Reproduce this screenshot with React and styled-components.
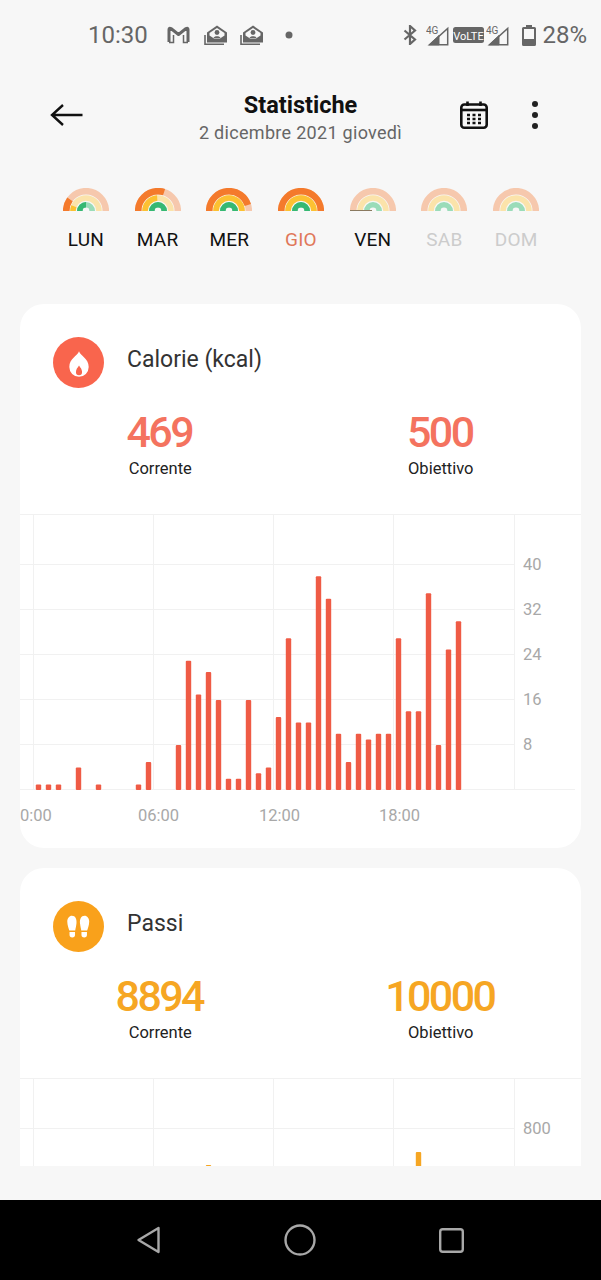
import React from "react";
import styled, { createGlobalStyle } from "styled-components";

const GlobalStyle = createGlobalStyle`
  * { box-sizing: border-box; }
  html, body { margin: 0; padding: 0; background: #f7f7f7; }
  body { font-family: Roboto, "Liberation Sans", sans-serif; }
`;

const Screen = styled.div`
  width: 601px;
  height: 1280px;
  display: flex;
  flex-direction: column;
  background: #f7f7f7;
  overflow: hidden;
`;

const Content = styled.div`
  height: 1166px;
  overflow: hidden;
  flex-shrink: 0;
`;

const StatusBar = styled.div`
  height: 70px;
  display: flex;
  align-items: center;
  justify-content: space-between;
  padding: 0 14px 0 88px;
  color: #666;
`;

const StatusGroup = styled.div`
  display: flex;
  align-items: center;
`;

const StatusText = styled.span`
  font-size: 24px;
  line-height: 28px;
  color: #666;
  margin-left: ${(p) => p.$ml || 0}px;
`;

const StatusIcon = styled.svg`
  display: block;
  flex-shrink: 0;
  margin-left: ${(p) => p.$ml || 0}px;
`;

const Header = styled.header`
  display: grid;
  grid-template-columns: 1fr auto 1fr;
  align-items: center;
  height: 62px;
  margin-top: 17px;
`;

const BackSlot = styled.div`
  padding-left: 50px;
  display: flex;
  align-items: center;
  margin-bottom: 7px;
`;

const TitleBlock = styled.div`
  text-align: center;
`;

const Title = styled.div`
  font-size: 23.5px;
  line-height: 30px;
  font-weight: 700;
  color: #111;
`;

const Subtitle = styled.div`
  font-size: 18px;
  line-height: 26px;
  color: #666;
  letter-spacing: 0.3px;
`;

const HeaderActions = styled.div`
  display: flex;
  align-items: center;
  justify-content: flex-end;
  gap: 44px;
  padding-right: 63px;
  margin-bottom: 7px;
`;

const Week = styled.div`
  display: grid;
  grid-template-columns: repeat(7, 1fr);
  padding: 0 49px 0 50px;
  margin-top: 39px;
  height: 116px;
`;

const Day = styled.div`
  display: flex;
  flex-direction: column;
  align-items: center;
`;

const DayLabel = styled.span`
  margin-top: 17px;
  font-size: 19px;
  line-height: 24px;
  letter-spacing: 0.2px;
  color: ${(p) => p.$color};
`;

const Card = styled.section`
  margin: 0 20px 20px;
  background: #fff;
  border-radius: 24px;
  overflow: hidden;
`;

const CardHead = styled.div`
  display: flex;
  align-items: center;
  gap: 23px;
  padding: 33px 0 0 33px;
  height: 83px;
`;

const CardTitle = styled.h2`
  margin: 0 0 4px;
  font-size: 23px;
  line-height: 30px;
  font-weight: 400;
  color: #333;
`;

const Stats = styled.div`
  display: grid;
  grid-template-columns: 1fr 1fr;
  height: 127px;
  padding-top: 22px;
`;

const Stat = styled.div`
  display: flex;
  flex-direction: column;
  align-items: center;
`;

const StatValue = styled.div`
  font-size: 43px;
  line-height: 46px;
  font-weight: 500;
  letter-spacing: -2.6px;
  padding-right: 2px;
  color: ${(p) => p.$color};
`;

const StatLabel = styled.div`
  font-size: 16.5px;
  line-height: 22px;
  margin-top: 3px;
  color: #222;
`;

const ChartSvg = styled.svg`
  display: block;
`;

const NavSpacer = styled.div`
  flex: 1;
`;

const NavBar = styled.nav`
  height: 80px;
  background: #000;
  display: flex;
  align-items: center;
  justify-content: center;
  gap: 123px;
  padding-right: 1px;
`;

const WEEK = [
  { label: "LUN", color: "#111", rings: [20, 12, 50] },
  { label: "MAR", color: "#111", rings: [60, 48, 100] },
  { label: "MER", color: "#111", rings: [90, 100, 100] },
  { label: "GIO", color: "#e0775a", rings: [100, 100, 100] },
  { label: "VEN", color: "#111", rings: [0, 0, 0], line: true },
  { label: "SAB", color: "#ccc", rings: [0, 0, 0] },
  { label: "DOM", color: "#ccc", rings: [0, 0, 0] },
];

const RINGS = [
  { r: 19.8, w: 6.6, pale: "#f6c8ad", strong: "#f47a2c" },
  { r: 13, w: 5.6, pale: "#fbe3aa", strong: "#fcc132" },
  { r: 6.2, w: 5.6, pale: "#9adcb9", strong: "#36b873" },
];

const arcPath = (r) => `M${23 - r} 23A${r} ${r} 0 0 1 ${23 + r} 23`;

const Rainbow = ({ rings, line }) => (
  <svg width="46" height="23" viewBox="0 0 46 23" style={{ display: "block" }}>
    {RINGS.map((ring, i) => (
      <g key={i} fill="none" strokeWidth={ring.w}>
        <path d={arcPath(ring.r)} stroke={ring.pale} />
        {rings[i] > 0 && (
          <path d={arcPath(ring.r)} stroke={ring.strong} pathLength="100" strokeDasharray={`${rings[i]} 100`} />
        )}
      </g>
    ))}
    <circle cx="23" cy="23" r="3" fill="#f7f7f7" />
    {line && <rect x="0" y="22" width="22" height="1" fill="#8a7a60" />}
  </svg>
);

// bar index -> value, x = 38.5 + 10 * index
const CALORIES = {
  0: 1, 1: 1, 2: 1, 4: 4, 6: 1, 10: 1, 11: 5, 14: 8, 15: 23, 16: 17, 17: 21, 18: 16, 19: 2, 20: 2,
  21: 16, 22: 3, 23: 4, 24: 13, 25: 27, 26: 12, 27: 12, 28: 38, 29: 34, 30: 10, 31: 5, 32: 10,
  33: 9, 34: 10, 35: 10, 36: 27, 37: 14, 38: 14, 39: 35, 40: 8, 41: 25, 42: 30,
};
const STEPS = { 17: 672, 38: 718 };

const VERTICALS = [13, 133, 253, 373, 494];
const GRID_YS = [50, 95, 140, 185, 230];
const TIMES = [["0:00", 0], ["06:00", 118], ["12:00", 239], ["18:00", 359]];
const GRID = "#f1f1f1";
const AXIS = "#a8a8a8";

const Chart = ({ data, max, ticks, times = [], height = 334, color }) => (
  <ChartSvg width="561" height={height} viewBox={`0 0 561 ${height}`}>
    <line x1="0" x2="561" y1="0.5" y2="0.5" stroke={GRID} />
    {GRID_YS.map((y) => (
      <line key={y} x1="0" x2="494" y1={y + 0.5} y2={y + 0.5} stroke={GRID} />
    ))}
    <line x1="0" x2="555" y1="275.5" y2="275.5" stroke={GRID} />
    {VERTICALS.map((x) => (
      <line key={x} x1={x + 0.5} x2={x + 0.5} y1="0" y2="276" stroke={GRID} />
    ))}
    {Object.entries(data).map(([i, v]) => {
      const h = (v / max) * 225;
      return <rect key={i} x={15.8 + 10 * i} y={276 - h} width="5.4" height={h} rx="1" fill={color} />;
    })}
    {ticks.map((t, i) => (
      <text key={t} x="503" y={GRID_YS[i] + 6} fontSize="16.5" fill={AXIS}>{t}</text>
    ))}
    {times.map(([t, x]) => (
      <text key={t} x={x} y="307" fontSize="16.5" fill={AXIS}>{t}</text>
    ))}
  </ChartSvg>
);

const FlameBadge = () => (
  <svg width="51" height="51" viewBox="0 0 50 50" style={{ display: "block", flexShrink: 0 }}>
    <circle cx="25" cy="25" r="25" fill="#f9654d" />
    <path d="M25.5 14C27 18.5 35 21 35 29.5A9.500 9.500 0 0 1 16 29.5C16 21 24 18.5 25.5 14Z" fill="#fff" />
    <path d="M25.5 28C27 30.5 28.5 31.500 28.5 34.500A3 3 0 0 1 22.5 34.500C22.500 31.500 24 30.500 25.500 28Z" fill="#f9654d" />
  </svg>
);

const Foot = () => (
  <g fill="#fff">
    <path d="M18.5 14.5C22 14.5 23.5 18 23 22C22.7 25 22 27 21.8 29L16 29C15.5 27 14 24 14 20C14 17 16 14.5 18.5 14.5Z" />
    <path d="M16.2 30.5L21.6 30.5L21.6 33A2.700 2.700 0 0 1 16.2 33Z" />
  </g>
);

const FeetBadge = () => (
  <svg width="51" height="51" viewBox="0 0 50 50" style={{ display: "block", flexShrink: 0 }}>
    <circle cx="25" cy="25" r="25" fill="#f9a11b" />
    <Foot />
    <g transform="translate(49.5 0) scale(-1 1)"><Foot /></g>
  </svg>
);

const PhotoMail = ({ ml }) => (
  <StatusIcon $ml={ml} width="24" height="21" viewBox="0 0 24 21">
    <path d="M1 10V19.2H20" stroke="#666" strokeWidth="1.6" fill="none" />
    <path d="M3 7.5L13 0.5L23 7.5V17.5H3Z" fill="#666" />
    <path d="M5.5 8L13 3L20.5 8V10.5L16 13.5H10L5.5 10.5Z" fill="#f7f7f7" />
    <circle cx="13" cy="7.5" r="2.4" fill="#666" />
    <path d="M9.5 13C10 10.5 16 10.5 16.5 13Z" fill="#666" />
  </StatusIcon>
);

const Signal = ({ ml }) => (
  <StatusIcon $ml={ml} width="23" height="21" viewBox="0 0 23 21">
    <text x="0" y="9" fontSize="10" fill="#666" fontFamily="Roboto, sans-serif">4G</text>
    <path d="M21.7 3.5V19.8H3.5Z" fill="none" stroke="#666" strokeWidth="1.5" />
    <path d="M3.5 19.8L13 10.5V19.8Z" fill="#666" stroke="#666" strokeWidth="1" />
  </StatusIcon>
);

const Statistiche = () => (
  <Screen>
    <GlobalStyle />
    <Content>
      <StatusBar>
        <StatusGroup>
          <StatusText>10:30</StatusText>
          <StatusIcon $ml={19} width="23" height="18" viewBox="0 0 23 18">
            <path d="M2 16V3.5Q2 1.5 4 2.5L11.5 8.5L19 2.5Q21 1.5 21 3.500V16" fill="none" stroke="#666" strokeWidth="3" strokeLinejoin="round" />
            <path d="M2 16.5H6.5V9M21 16.5H16.5V9" fill="none" stroke="#666" strokeWidth="1.5" />
          </StatusIcon>
          <PhotoMail ml={14} />
          <PhotoMail ml={12} />
          <StatusIcon $ml={21} width="8" height="8" viewBox="0 0 8 8">
            <circle cx="4" cy="4" r="3.5" fill="#666" />
          </StatusIcon>
        </StatusGroup>
        <StatusGroup>
          <StatusIcon width="14" height="20" viewBox="0 0 14 20">
            <path d="M1.5 5.5L12 14.5L7 19V1L12 5.5L1.5 14.5" fill="none" stroke="#666" strokeWidth="2.2" />
          </StatusIcon>
          <Signal ml={9} />
          <StatusIcon $ml={4} width="31" height="16" viewBox="0 0 31 16">
            <rect width="31" height="16" rx="2.5" fill="#666" />
            <text x="15.5" y="12.5" fontSize="11" fill="#fff" fontFamily="Roboto, sans-serif" textAnchor="middle">VoLTE</text>
          </StatusIcon>
          <Signal ml={2} />
          <StatusIcon $ml={13} width="14" height="21" viewBox="0 0 14 21">
            <path d="M4 0H10V2H12.5Q14 2 14 3.5V19.5Q14 21 12.5 21H1.5Q0 21 0 19.5V3.5Q0 2 1.5 2H4Z" fill="#666" />
            <rect x="2" y="4" width="10" height="10" fill="#f7f7f7" />
          </StatusIcon>
          <StatusText $ml={6}>28%</StatusText>
        </StatusGroup>
      </StatusBar>

      <Header>
        <BackSlot>
          <svg width="33" height="24" viewBox="0 0 33 24" style={{ display: "block" }}>
            <path d="M32.5 12H2M13 2L2 12L13 22" fill="none" stroke="#111" strokeWidth="2.4" />
          </svg>
        </BackSlot>
        <TitleBlock>
          <Title>Statistiche</Title>
          <Subtitle>2 dicembre 2021 giovedì</Subtitle>
        </TitleBlock>
        <HeaderActions>
          <svg width="28" height="28" viewBox="0 0 28 28" style={{ display: "block" }}>
            <rect x="1.3" y="3.5" width="25.4" height="23.2" rx="3" fill="none" stroke="#111" strokeWidth="2.6" />
            <path d="M1.3 9H26.7" stroke="#111" strokeWidth="2.6" />
            <path d="M7.5 0.5V5M20.5 0.5V5" stroke="#111" strokeWidth="2.6" />
            <path d="M7 14H10M12.5 14H15.5M18 14H21M7 18H10M12.5 18H15.5M18 18H21M7 22H10M12.5 22H15.5M18 22H21" stroke="#111" strokeWidth="2.4" />
          </svg>
          <svg width="6" height="28" viewBox="0 0 6 28" style={{ display: "block" }}>
            <circle cx="3" cy="3" r="3" fill="#222" />
            <circle cx="3" cy="14" r="3" fill="#222" />
            <circle cx="3" cy="25" r="3" fill="#222" />
          </svg>
        </HeaderActions>
      </Header>

      <Week>
        {WEEK.map((d) => (
          <Day key={d.label}>
            <Rainbow rings={d.rings} line={d.line} />
            <DayLabel $color={d.color}>{d.label}</DayLabel>
          </Day>
        ))}
      </Week>

      <Card>
        <CardHead>
          <FlameBadge />
          <CardTitle>Calorie (kcal)</CardTitle>
        </CardHead>
        <Stats>
          <Stat>
            <StatValue $color="#f4735f">469</StatValue>
            <StatLabel>Corrente</StatLabel>
          </Stat>
          <Stat>
            <StatValue $color="#f4735f">500</StatValue>
            <StatLabel>Obiettivo</StatLabel>
          </Stat>
        </Stats>
        <Chart data={CALORIES} max={40} ticks={[40, 32, 24, 16, 8]} times={TIMES} color="#ef5b45" />
      </Card>

      <Card>
        <CardHead>
          <FeetBadge />
          <CardTitle>Passi</CardTitle>
        </CardHead>
        <Stats>
          <Stat>
            <StatValue $color="#f6a623">8894</StatValue>
            <StatLabel>Corrente</StatLabel>
          </Stat>
          <Stat>
            <StatValue $color="#f6a623">10000</StatValue>
            <StatLabel>Obiettivo</StatLabel>
          </Stat>
        </Stats>
        <Chart data={STEPS} max={800} ticks={[800]} color="#f6a623" />
      </Card>
    </Content>
    <NavSpacer />
    <NavBar>
      <svg width="25" height="28" viewBox="0 0 25 28" style={{ display: "block" }}>
        <path d="M22.5 2L2.5 14L22.5 26Z" fill="none" stroke="#a8a8a8" strokeWidth="2.4" strokeLinejoin="round" />
      </svg>
      <svg width="32" height="32" viewBox="0 0 32 32" style={{ display: "block" }}>
        <circle cx="16" cy="16" r="14.5" fill="none" stroke="#a8a8a8" strokeWidth="2.4" />
      </svg>
      <svg width="25" height="25" viewBox="0 0 25 25" style={{ display: "block" }}>
        <rect x="1.2" y="1.2" width="22.6" height="22.6" rx="2.5" fill="none" stroke="#a8a8a8" strokeWidth="2.4" />
      </svg>
    </NavBar>
  </Screen>
);

export default Statistiche;
